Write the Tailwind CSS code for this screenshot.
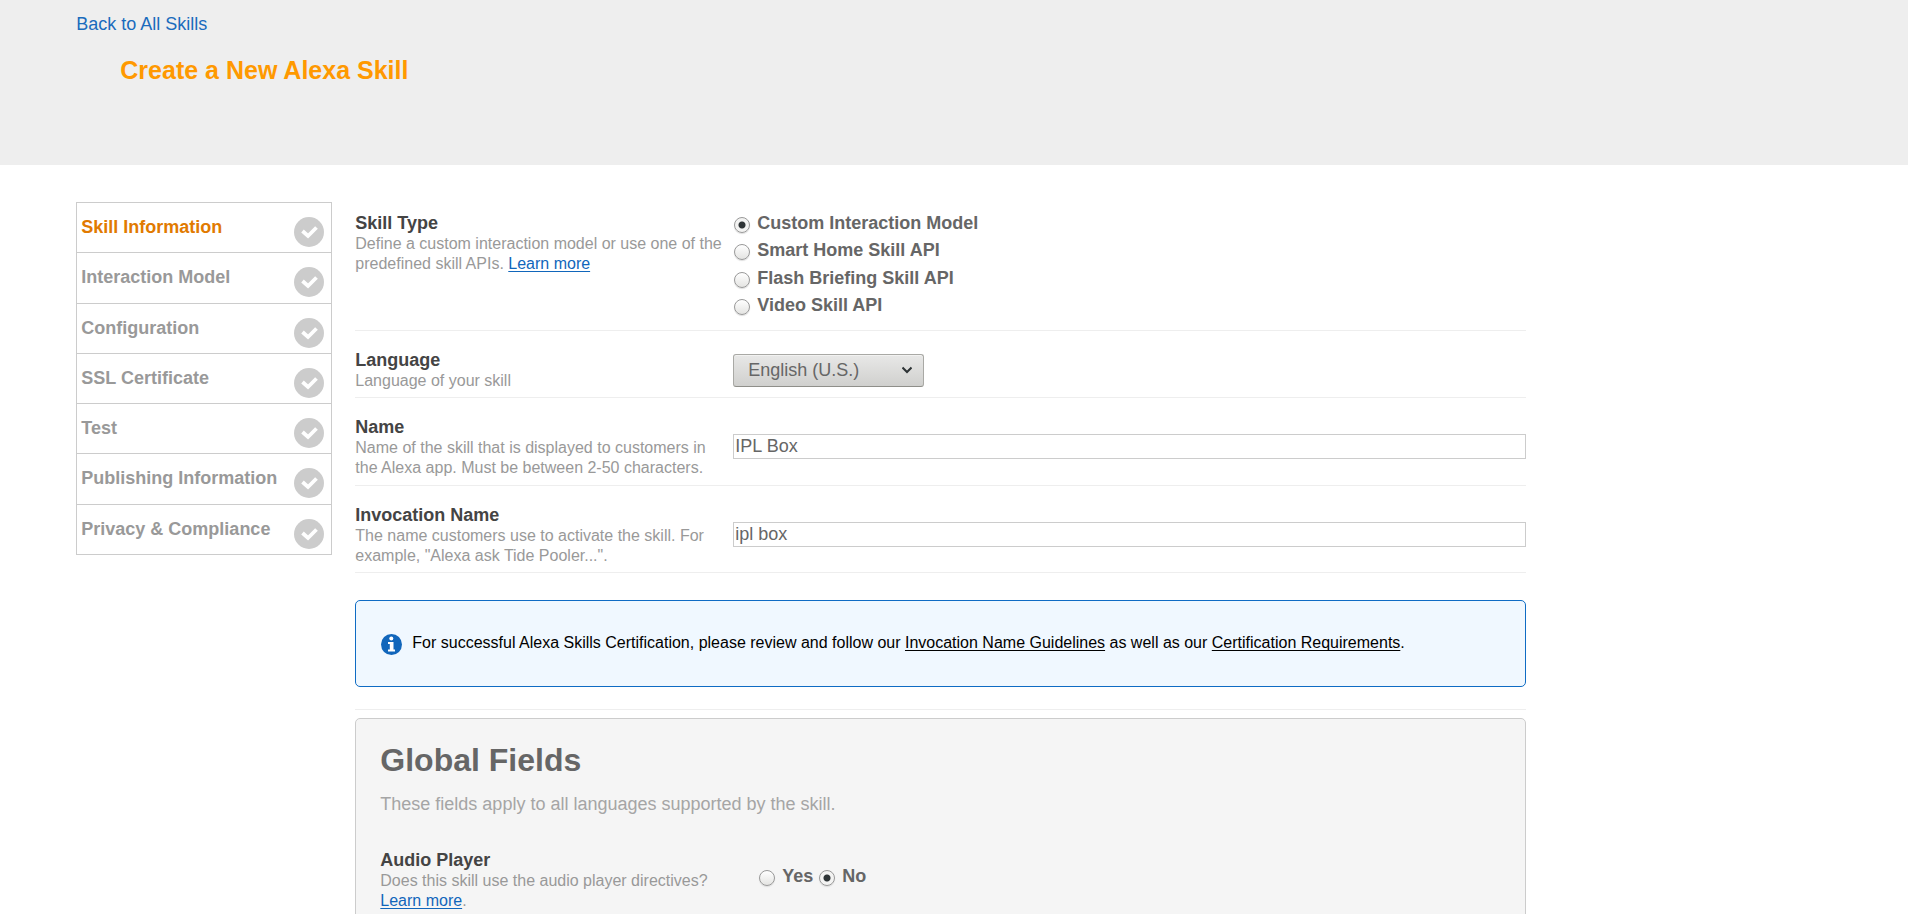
<!DOCTYPE html>
<html lang="en">
<head>
<meta charset="utf-8">
<meta name="viewport" content="width=device-width, initial-scale=1">
<title>Create a New Alexa Skill</title>
<script src="https://cdn.jsdelivr.net/npm/@tailwindcss/browser@4"></script>
</head>
<body class="bg-white font-['Liberation_Sans',Arial,sans-serif] text-[18px] leading-5 text-[#666]">
<svg class="hidden" aria-hidden="true">
  <symbol id="done" viewBox="0 0 30 30">
    <circle cx="15" cy="15" r="15" fill="#ccc"/>
    <path d="M8.500 14l5.500 5 8.500-8.500" fill="none" stroke="#fff" stroke-width="3.800"/>
  </symbol>
</svg>

<div class="h-screen overflow-y-auto pr-3 [scrollbar-width:none]">
<header class="min-h-[165px] bg-[#eee] pt-[10px] pl-[4%]">
  <a href="#" class="block w-fit text-[#1a6bbd] leading-7">Back to All Skills</a>
  <h1 class="mt-[17px] pl-11 text-[25px] leading-[30px] font-bold text-[#ff9900]">Create a New Alexa Skill</h1>
</header>

<div class="flex w-4/5 gap-[23px] pt-[37px] pl-[4%]">
  <nav class="h-fit w-64 shrink-0 border border-b-0 border-[#ccc] font-bold text-[#999]">
    <ul class="flex min-h-[352px] flex-col">
      <li class="flex-1 border-b border-[#ccc]"><a href="#" class="flex justify-between pt-[14px] pr-[7px] pb-1 pl-1 text-[#e17a00]">Skill Information<svg class="size-[30px]"><use href="#done"/></svg></a></li>
      <li class="flex-1 border-b border-[#ccc]"><a href="#" class="flex justify-between pt-[14px] pr-[7px] pb-1 pl-1">Interaction Model<svg class="size-[30px]"><use href="#done"/></svg></a></li>
      <li class="flex-1 border-b border-[#ccc]"><a href="#" class="flex justify-between pt-[14px] pr-[7px] pb-1 pl-1">Configuration<svg class="size-[30px]"><use href="#done"/></svg></a></li>
      <li class="flex-1 border-b border-[#ccc]"><a href="#" class="flex justify-between pt-[14px] pr-[7px] pb-1 pl-1">SSL Certificate<svg class="size-[30px]"><use href="#done"/></svg></a></li>
      <li class="flex-1 border-b border-[#ccc]"><a href="#" class="flex justify-between pt-[14px] pr-[7px] pb-1 pl-1">Test<svg class="size-[30px]"><use href="#done"/></svg></a></li>
      <li class="flex-1 border-b border-[#ccc]"><a href="#" class="flex justify-between pt-[14px] pr-[7px] pb-1 pl-1">Publishing Information<svg class="size-[30px]"><use href="#done"/></svg></a></li>
      <li class="flex-1 border-b border-[#ccc]"><a href="#" class="flex justify-between pt-[14px] pr-[7px] pb-1 pl-1">Privacy &amp; Compliance<svg class="size-[30px]"><use href="#done"/></svg></a></li>
    </ul>
  </nav>

  <main class="min-w-0 flex-1">
    <form>
      <section class="flex border-b border-[#eee] pt-[11px] pb-2">
        <div class="w-[378px] shrink-0 pr-1">
          <h2 id="type" class="font-bold text-[#444]">Skill Type</h2>
          <p class="mt-px -mb-px text-base leading-5 text-[#999]">Define a custom interaction model or use one of the predefined skill APIs. <a href="#" class="text-[#1166bb] underline decoration-1 underline-offset-2 [text-decoration-skip-ink:none]">Learn more</a></p>
        </div>
        <div role="radiogroup" aria-labelledby="type" class="flex min-h-[109px] flex-col justify-between pl-px font-bold">
          <label class="flex items-start gap-[7px] pb-[7px]"><input type="radio" name="type" checked class="mt-1 size-4 shrink-0 appearance-none rounded-full border border-[#999] bg-linear-to-b from-white to-[#e4e4e2] shadow-[0_1px_1px_#ddd] checked:bg-[radial-gradient(circle,#2e3436_3px,#f3f3f2_4px)]">Custom Interaction Model</label>
          <label class="flex items-start gap-[7px] pb-[7px]"><input type="radio" name="type" class="mt-1 size-4 shrink-0 appearance-none rounded-full border border-[#999] bg-linear-to-b from-white to-[#e4e4e2] shadow-[0_1px_1px_#ddd] checked:bg-[radial-gradient(circle,#2e3436_3px,#f3f3f2_4px)]">Smart Home Skill API</label>
          <label class="flex items-start gap-[7px] pb-[7px]"><input type="radio" name="type" class="mt-1 size-4 shrink-0 appearance-none rounded-full border border-[#999] bg-linear-to-b from-white to-[#e4e4e2] shadow-[0_1px_1px_#ddd] checked:bg-[radial-gradient(circle,#2e3436_3px,#f3f3f2_4px)]">Flash Briefing Skill API</label>
          <label class="flex items-start gap-[7px] pb-[7px]"><input type="radio" name="type" class="mt-1 size-4 shrink-0 appearance-none rounded-full border border-[#999] bg-linear-to-b from-white to-[#e4e4e2] shadow-[0_1px_1px_#ddd] checked:bg-[radial-gradient(circle,#2e3436_3px,#f3f3f2_4px)]">Video Skill API</label>
        </div>
      </section>

      <section class="flex items-center border-b border-[#eee] pt-[19px] pb-[7px]">
        <div class="w-[378px] shrink-0 pr-1">
          <label for="language" class="block font-bold text-[#444]">Language</label>
          <p class="mt-px -mb-px text-base leading-5 text-[#999]">Language of your skill</p>
        </div>
        <div class="relative">
          <select id="language" class="block h-[33px] w-[191px] appearance-none rounded-[3px] border border-[#a9a9a5] border-b-[#8f8f8a] bg-linear-to-b from-[#e8e8e7] to-[#d0d0ce] pl-[14px] shadow-[inset_0_1px_0_#f2f2f1]"><option>English (U.S.)</option></select>
          <svg class="pointer-events-none absolute top-[12px] right-3 h-2 w-[10px]" viewBox="0 0 10 8" aria-hidden="true"><path d="M.5 1.500L5 6l4.500-4.500" fill="none" stroke="#2e3436" stroke-width="2"/></svg>
        </div>
      </section>

      <section class="flex items-center border-b border-[#eee] pt-[19px] pb-2">
        <div class="w-[378px] shrink-0 pr-1">
          <label for="name" class="block font-bold text-[#444]">Name</label>
          <p class="mt-px -mb-px text-base leading-5 text-[#999]">Name of the skill that is displayed to customers in the Alexa app. Must be between 2-50 characters.</p>
        </div>
        <input id="name" type="text" value="IPL Box" class="mb-px h-[25px] min-w-0 flex-1 border border-[#ccc] bg-white px-px pb-px">
      </section>

      <section class="flex items-center border-b border-[#eee] pt-[19px] pb-[7px]">
        <div class="w-[378px] shrink-0 pr-1">
          <label for="invocation" class="block font-bold text-[#444]">Invocation Name</label>
          <p class="mt-px -mb-px text-base leading-5 text-[#999]">The name customers use to activate the skill. For example, "Alexa ask Tide Pooler...".</p>
        </div>
        <input id="invocation" type="text" value="ipl box" class="mb-px h-[25px] min-w-0 flex-1 border border-[#ccc] bg-white px-px pb-px">
      </section>

      <div class="border-b border-[#eee] pt-[27px] pb-[22px]">
        <div class="flex items-start gap-[10px] rounded-[5px] border border-[#0f6cc4] bg-[#f0f8ff] px-[25px] py-[31px] text-base leading-5 text-black">
          <svg class="mt-[2px] size-[21px] shrink-0" viewBox="0 0 21 21" aria-hidden="true"><circle cx="10.500" cy="10.500" r="10.500" fill="#1166bb"/><circle cx="10.300" cy="4.500" r="2" fill="#fff"/><path d="M7 8h5.500v7.500H14v2H7v-2h1.800V10H7z" fill="#fff"/></svg>
          <p class="pt-px">For successful Alexa Skills Certification, please review and follow our <a href="#" class="underline decoration-1 underline-offset-2 [text-decoration-skip-ink:none]">Invocation Name Guidelines</a> as well as our <a href="#" class="underline decoration-1 underline-offset-2 [text-decoration-skip-ink:none]">Certification Requirements</a>.</p>
        </div>
      </div>

      <section class="mt-2 rounded-[5px] border border-[#ccc] bg-[#f5f5f5] px-6 pt-[23px] pb-10">
        <h2 class="text-[32px] leading-9 font-bold">Global Fields</h2>
        <p class="mt-4 text-[#a5a5a5]">These fields apply to all languages supported by the skill.</p>
        <div class="mt-9 flex items-start">
          <div class="w-[378px] shrink-0 pr-1">
            <h3 id="audio" class="font-bold text-[#444]">Audio Player</h3>
            <p class="mt-px -mb-px pr-8 text-base leading-5 text-[#999]">Does this skill use the audio player directives? <a href="#" class="text-[#1166bb] underline decoration-1 underline-offset-2 [text-decoration-skip-ink:none]">Learn more</a>.</p>
          </div>
          <div role="radiogroup" aria-labelledby="audio" class="flex gap-[6px] pt-4 pl-px font-bold">
            <label class="flex items-start gap-[7px]"><input type="radio" name="audio" class="mt-1 size-4 shrink-0 appearance-none rounded-full border border-[#999] bg-linear-to-b from-white to-[#e4e4e2] shadow-[0_1px_1px_#ddd] checked:bg-[radial-gradient(circle,#2e3436_3px,#f3f3f2_4px)]">Yes</label>
            <label class="flex items-start gap-[7px]"><input type="radio" name="audio" checked class="mt-1 size-4 shrink-0 appearance-none rounded-full border border-[#999] bg-linear-to-b from-white to-[#e4e4e2] shadow-[0_1px_1px_#ddd] checked:bg-[radial-gradient(circle,#2e3436_3px,#f3f3f2_4px)]">No</label>
          </div>
        </div>
      </section>
    </form>
  </main>
</div>
</div>
</body>
</html>
